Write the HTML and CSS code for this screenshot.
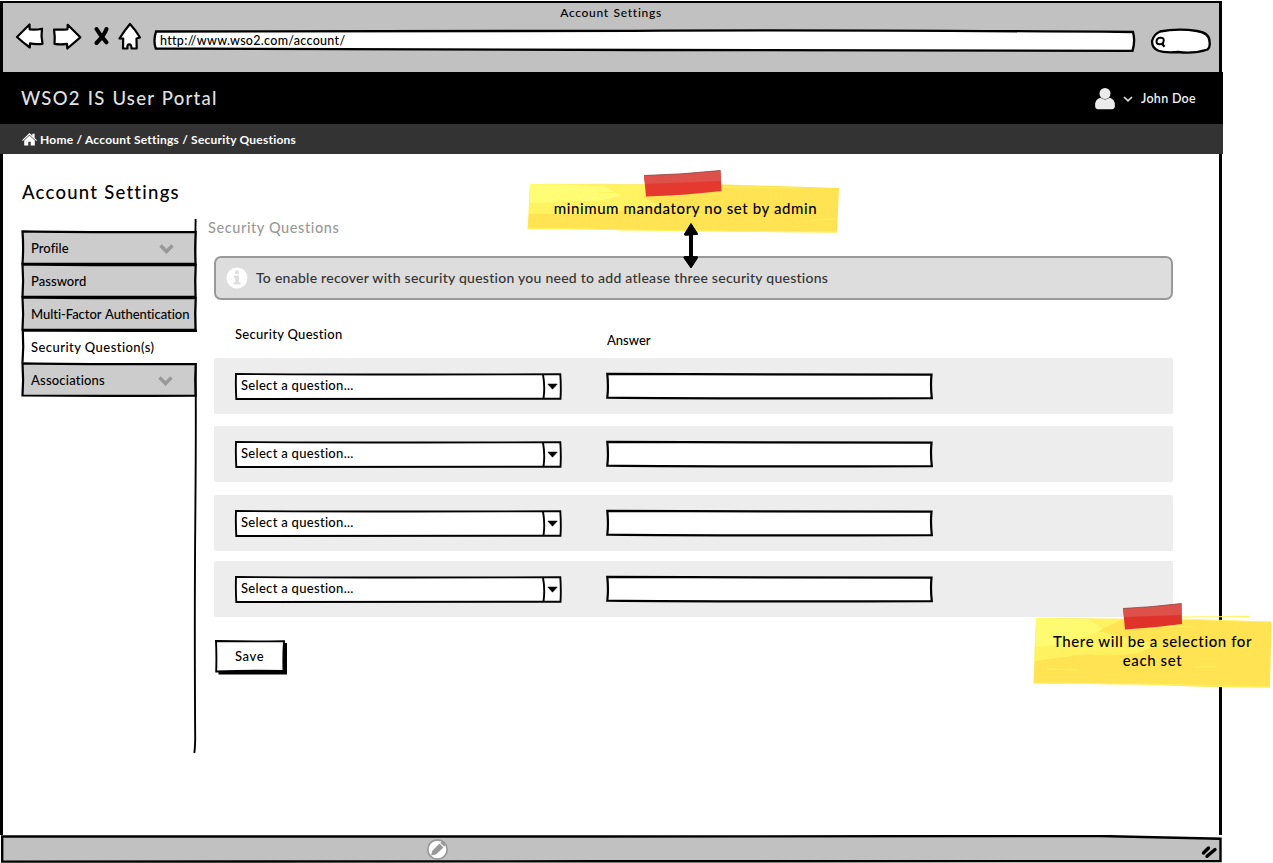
FILE: index.html
```
<!DOCTYPE html>
<html lang="en">
<head>
<meta charset="utf-8">
<title>Account Settings</title>
<link rel="stylesheet" href="styles.css">
</head>
<body>
<div class="stage">
<div class="window">
  <header class="chrome">
    <div class="chrome-title"><span>Account Settings</span></div>
    <div class="toolbar">
      <svg class="nav-icon" width="136" height="34" viewBox="0 0 136 34">
        <g fill="#fff" stroke="#000" stroke-width="2.2" stroke-linejoin="round">
          <path d="M3 17 15.500 4.500 15.700 9.500Q23 10 28 8.700Q26.800 16 28.500 23.800Q21 24.500 16 23.400L15.800 27.500Q9 22.500 3 17Z"/>
          <path d="M40 9.500Q47 10 53.500 9.300L53.700 4.800 66.300 17.300 53.300 28.500 53 23.800Q46.500 24.800 40.500 23.800Q41.200 17 40 9.500Z"/>
          <path d="M116 4Q121.500 10 126 17.500L122.500 18.500 122.700 28.500 117.500 28.500Q117.500 24 115 24.300Q113 24.500 113.500 28.500L109 28.500 109.200 18.700 105.500 18.500Q110.500 10.500 116 4Z"/>
        </g>
        <path d="M82.500 9Q86 15 92.500 22.300M92.500 9Q90.500 15 82.500 23" fill="none" stroke="#000" stroke-width="4" stroke-linecap="round"/>
      </svg>
      <div class="url sketch">
        <svg class="outline" viewBox="0 0 983 24"><path d="M3 2.500Q300 3 480 1.800T980 3Q982.500 12 979.500 21.800Q600 22 490 21T2.800 19.500Q0 12 3 2.500Z" fill="#fff" stroke="#000" stroke-width="2.300"/></svg>
        <span>http://www.wso2.com/account/</span>
      </div>
      <svg class="search" width="62" height="28" viewBox="0 0 62 28">
        <path d="M10 4.500Q28 1 47 4Q60 6 59.500 15Q60.500 20 57.500 22.500Q44 27 28 25Q14 26 8 23.500Q2 21 2 14Q4 7 10 4.500Z" fill="#fff" stroke="#000" stroke-width="2.300"/>
        <path d="M6.500 15Q6.500 11 10 10.700Q14 10.300 13.700 13.500Q13.500 17.300 10 17.300Q6.800 17.500 6.500 15Z" fill="none" stroke="#000" stroke-width="2"/><path d="M11.500 16 14.500 19.800" stroke="#000" stroke-width="2.200"/>
      </svg>
    </div>
  </header>

  <div class="portal">
    <span class="portal-name">WSO2 IS User Portal</span>
    <div class="user">
      <svg width="20" height="22" viewBox="0 0 20 22" fill="#ebebeb"><circle cx="10" cy="5.500" r="5.500"/><path d="M5.500 9.800Q10 13.200 14.500 9.800Q20 11 19.900 17.500Q20 21.300 17 21.300H3Q0 21.300 .1 17.500Q0 11 5.500 9.800Z"/></svg>
      <svg width="10" height="6" viewBox="0 0 10 6"><path d="M1 1 5 4.800 9 1" fill="none" stroke="#ddd" stroke-width="1.700"/></svg>
      <span class="user-name">John Doe</span>
    </div>
  </div>
  <nav class="crumbs">
    <svg width="15" height="13" viewBox="0 0 15 13" fill="#fff"><path d="M7.500 0 10.300 2.700V.8H12.600V5L15 7.300 14.200 8.100 7.500 1.700 .8 8.100 0 7.300Z"/><path d="M7.500 2.500 12.800 7.500V12.500H8.700V8.800H6.300V12.500H2.200V7.500Z"/></svg>
    <span>Home / Account Settings / Security Questions</span>
  </nav>

  <div class="body">
    <aside class="side">
      <h1 class="page-title">Account Settings</h1>
      <div class="tabs">
        <svg class="rule" width="4" height="535" viewBox="0 0 4 535"><path d="M2.600 0Q1.800 60 2.500 130T2.300 300 2.200 520Q2 530 1.300 534" fill="none" stroke="#000" stroke-width="1.900"/></svg>
        <div class="tab profile sketch"><svg class="outline" viewBox="0 0 176 35"><path d="M1.500 1.300Q60 2.300 174.700 2Q173.800 17 174.500 33.600Q70 34 1.500 33.500Q2.700 18 1.500 1.300Z"/></svg><span>Profile</span><svg class="chev" width="15" height="10" viewBox="0 0 15 10"><path d="M1.500 1.500 7.500 7.500 13.500 1.500"/></svg></div>
        <div class="tab password sketch"><svg class="outline" viewBox="0 0 176 35"><path d="M1.500 1.300Q60 2.300 174.700 2Q173.800 17 174.500 33.600Q70 34 1.500 33.500Q2.700 18 1.500 1.300Z"/></svg><span>Password</span></div>
        <div class="tab mfa sketch"><svg class="outline" viewBox="0 0 176 35"><path d="M1.500 1.300Q60 2.300 174.700 2Q173.800 17 174.500 33.600Q70 34 1.500 33.500Q2.700 18 1.500 1.300Z"/></svg><span>Multi-Factor Authentication</span></div>
        <div class="tab active sketch"><svg class="outline" viewBox="0 0 176 35"><path class="blank" d="M1.500 1.500H176V34H1.500Z"/><path class="open" d="M176 1.800Q60 2 1.800 1.500Q2.800 18 1.500 33.500"/></svg><span>Security Question(s)</span></div>
        <div class="tab assoc sketch"><svg class="outline" viewBox="0 0 176 35"><path d="M1.500 1.300Q60 2.300 174.700 2Q173.800 17 174.500 33.600Q70 34 1.500 33.500Q2.700 18 1.500 1.300Z"/></svg><span>Associations</span><svg class="chev" width="15" height="10" viewBox="0 0 15 10"><path d="M1.500 1.500 7.500 7.500 13.500 1.500"/></svg></div>
      </div>
    </aside>

    <main class="main">
      <h2 class="section-title">Security Questions</h2>
      <div class="alert">
        <svg width="22" height="22" viewBox="0 0 22 22"><circle cx="11" cy="11" r="10.500" fill="#fff"/><circle cx="11" cy="5.300" r="2" fill="#ddd"/><path d="M8 8.600H12.800V15.200H14.500V17.500H7.500V15.200H9.300V10.800H8Z" fill="#ddd"/></svg>
        <span>To enable recover with security question you need to add atlease three security questions</span>
      </div>
      <div class="labels"><span class="label-q">Security Question</span><span class="label-a">Answer</span></div>
      <div class="rows">
        <div class="row">
          <div class="select sketch"><svg class="outline" viewBox="0 0 327 28"><path d="M1 1Q150 1.900 325.300 1.200Q326.200 14 325.500 25.700Q130 26.200 1.300 26Q.6 14 1 1ZM308 1.500Q310.200 14 308.500 25.500"/><path class="caret" d="M312.800 11H322.300L317.500 16.200Z"/></svg><span>Select a question...</span></div>
          <div class="answer sketch"><svg class="outline" viewBox="0 0 327 28"><path d="M1.300 .9Q150 .9 325.500 1.700Q324.400 13 325.800 25.200Q120 25.900 1.300 24.700Q2.600 14 1.300 .9Z"/></svg></div>
        </div>
        <div class="row">
          <div class="select sketch"><svg class="outline" viewBox="0 0 327 28"><path d="M1 1Q150 1.900 325.300 1.200Q326.200 14 325.500 25.700Q130 26.200 1.300 26Q.6 14 1 1ZM308 1.500Q310.200 14 308.500 25.500"/><path class="caret" d="M312.800 11H322.300L317.500 16.200Z"/></svg><span>Select a question...</span></div>
          <div class="answer sketch"><svg class="outline" viewBox="0 0 327 28"><path d="M1.300 .9Q150 .9 325.500 1.700Q324.400 13 325.800 25.200Q120 25.900 1.300 24.700Q2.600 14 1.300 .9Z"/></svg></div>
        </div>
        <div class="row third">
          <div class="select sketch"><svg class="outline" viewBox="0 0 327 28"><path d="M1 1Q150 1.900 325.300 1.200Q326.200 14 325.500 25.700Q130 26.200 1.300 26Q.6 14 1 1ZM308 1.500Q310.200 14 308.500 25.500"/><path class="caret" d="M312.800 11H322.300L317.500 16.200Z"/></svg><span>Select a question...</span></div>
          <div class="answer sketch"><svg class="outline" viewBox="0 0 327 28"><path d="M1.300 .9Q150 .9 325.500 1.700Q324.400 13 325.800 25.200Q120 25.900 1.300 24.700Q2.600 14 1.300 .9Z"/></svg></div>
        </div>
        <div class="row fourth">
          <div class="select sketch"><svg class="outline" viewBox="0 0 327 28"><path d="M1 1Q150 1.900 325.300 1.200Q326.200 14 325.500 25.700Q130 26.200 1.300 26Q.6 14 1 1ZM308 1.500Q310.200 14 308.500 25.500"/><path class="caret" d="M312.800 11H322.300L317.500 16.200Z"/></svg><span>Select a question...</span></div>
          <div class="answer sketch"><svg class="outline" viewBox="0 0 327 28"><path d="M1.300 .9Q150 .9 325.500 1.700Q324.400 13 325.800 25.200Q120 25.900 1.300 24.700Q2.600 14 1.300 .9Z"/></svg></div>
        </div>
      </div>
      <div class="save sketch"><svg class="outline" viewBox="0 0 73 35"><path class="shadow" d="M3.500 3H72V34.500H3.500Z"/><path d="M1 1Q35 1.700 69 1.200Q68 15 68.500 31Q35 30.200 1.200 31.500Q1.700 15 1 1Z"/></svg><span>Save</span></div>
    </main>
  </div>

  <footer class="status">
    <svg class="status-line" width="1222" height="29" viewBox="0 0 1222 29"><path d="M2.200 1.500Q300 1.600 600 1.500T1100 1Q1160 2.500 1220.500 3.700V26Q900 25.800 600 26.300T2.200 26.600Z" fill="#c1c1c1" stroke="#000" stroke-width="2.400"/>
      <path d="M1203.500 18 1208.500 13M1207 21.300 1215 14.500" stroke="#000" stroke-width="3.400" stroke-linecap="round"/>
      <circle cx="437.500" cy="14.500" r="9.700" fill="#fff" stroke="#999" stroke-width="1.700"/>
      <path transform="translate(-.5 -1)" d="M431.500 21.500 432.800 16.800 440 9.600 443.900 13.400 436.500 20.600ZM440.800 8.900 442 7.800Q443 7.500 444.500 9T445.700 11.500L444.700 12.600Z" fill="#999"/></svg>
  </footer>
</div>

<div class="note note-top">
  <svg class="outline" viewBox="0 0 312 64">
    <path d="M3 14 200 14.500 312 18 310 62.500Q220 62.500 120 60L.5 59 1.500 44Z" fill="#ffe353"/>
    <path d="M3 14 150 15 115 27 135 36 60 44H1.500Z" fill="#fffa68" opacity=".7"/><path d="M3 14 75 15 95 26 70 31 3 33Z" fill="#ffff78" opacity=".8"/>
    <path d="M50 15 118 17 M70 22 145 25M30 31 144 36M50 41 110 41M150 44 180 45M285 50 309 49M160 17 274 18M1 58 70 59M90 60 310 62" fill="none" stroke="#fff35d" stroke-width="1.200"/>
    <path d="M117 5.500Q155 4.500 193.500 .5L194.500 21Q155 25.500 119 26.500Z" fill="#e5392f"/><path d="M117 5.500Q155 4.500 193.500 .5L194 11 118 14Z" fill="#dd514a"/><path d="M117 5.500Q155 4.500 193.500 .5" stroke="#8a5350" stroke-width=".8" fill="none"/>
  </svg>
  <span>minimum mandatory no set by admin</span>
</div>
<svg class="arrow" width="18" height="48" viewBox="0 0 18 48"><path d="M9 10V38" stroke="#000" stroke-width="4"/><path d="M9 1.500 15.500 11.500Q16 13 14 12.500L4 13.300Q2 13.500 2.500 12ZM9 46 15.500 36Q16 34 14 34.700L3 34.500Q1.500 34.500 2 36Z" stroke="#000" stroke-linejoin="round"/></svg>
<div class="note note-bottom">
  <svg class="outline" viewBox="0 0 239 86">
    <path d="M3 15 120 16 238.500 18.500 237 84.500Q180 85 110 81.500L.5 80.500 1 67Z" fill="#ffe353"/>
    <path d="M3 15 90 16 65 28 125 42 105 50 55 51 1 58Z" fill="#fffa68" opacity=".65"/><path d="M3 15 55 16 70 26 40 40 3 44Z" fill="#ffff78" opacity=".7"/>
    <path d="M140 14 216 13.500M150 16 235 19M15 48 75 52 104 50M14 66 45 67M100 22 160 24M160 64 184 64M1 80 110 81 237 84" fill="none" stroke="#fff35d" stroke-width="1.200"/>
    <path d="M90 5.500Q120 4 148.500 .5L149 21Q120 25 92 26.500Z" fill="#de322b"/><path d="M90 5.500Q120 4 148.500 .5L148.700 12 91 14Z" fill="#dd514a"/><path d="M90 5.500Q120 4 148.500 .5" stroke="#8a5350" stroke-width=".8" fill="none"/>
  </svg>
  <span>There will be a selection for<br>each set</span>
</div>
</div>
</body>
</html>
```
FILE: styles.css
```
* { box-sizing: border-box; }
body { margin: 0; background: #fff; color: #000; font: 500 13px/16px Lato, sans-serif; font-variant-ligatures: none; white-space: nowrap; }
h1, h2 { margin: 0; font-weight: 500; }
svg { display: block; flex: none; }
.stage { position: relative; width: 1273px; height: 863px; overflow: hidden; }
.window { display: flex; flex-direction: column; width: 1223px; height: 863px; }

/* hand-drawn outlines lie beneath a control's text */
.sketch { position: relative; }
.sketch > span { position: relative; }
.outline { position: absolute; left: 0; top: 0; width: 100%; height: 100%; overflow: visible; }

.chrome { width: 1222px; height: 71px; margin-top: 1px; background: #c1c1c1; border: solid #000; border-width: 2px 3px 0; }
.chrome-title { height: 19px; display: flex; justify-content: center; padding-top: 2px; font-size: 12px; letter-spacing: .7px; word-spacing: 1px; }
.toolbar { display: flex; align-items: flex-start; padding-left: 11px; }
.nav-icon { margin-top: -2px; }
.url { width: 983px; height: 24px; margin: 7px 0 0 3px; padding: 3px 0 0 7px; font-size: 12.500px; letter-spacing: .3px; }
.url > span { top: 1px; }
.search { margin: 5px 0 0 14px; }

.portal { height: 52px; background: #000; display: flex; align-items: center; justify-content: space-between; padding: 0 27px 0 21px; color: #e0e0e0; }
.portal-name { font-size: 18.500px; letter-spacing: 1.250px; word-spacing: 1px; }
.user { display: flex; align-items: center; gap: 8px; padding-top: 1px; }
.user-name { font-size: 12.500px; font-weight: 600; letter-spacing: .3px; color: #f0f0f0; }
.crumbs { height: 30px; background: #333; color: #fff; display: flex; align-items: center; gap: 3px; padding: 1px 0 0 22px; font-size: 12px; font-weight: 700; letter-spacing: .22px; }

.body { flex: 1; width: 1222px; display: flex; border: solid #000; border-width: 0 3px; }
.side { width: 194px; padding: 26px 0 0 19px; }
.page-title { font-size: 18.500px; line-height: 24px; letter-spacing: 1.250px; }
.tabs { position: relative; margin-left: -1px; padding-top: 26px; }
.rule { position: absolute; left: 172px; top: 15px; }
.tab { width: 176px; height: 33px; display: flex; align-items: center; justify-content: space-between; padding: 2px 23px 0 10px; letter-spacing: .05px; }
.tab .outline { height: 35px; fill: #ccc; stroke: #000; stroke-width: 2.200px; }
.tab .blank { fill: #fff; stroke: none; }
.tab .open { fill: none; }
.mfa { letter-spacing: -.05px; word-spacing: 1px; }
.active { letter-spacing: .45px; }
.assoc { padding-right: 24px; letter-spacing: .2px; }
.chev { position: relative; top: 1px; }
.chev path { fill: none; stroke: #999; stroke-width: 3.400px; }

.main { flex: 1; padding: 64px 0 0 11px; }
.section-title { font-size: 14.500px; line-height: 20px; letter-spacing: .6px; color: #999; }
.alert { width: 959px; height: 44px; margin: 18px 0 0 6px; border: 2px solid #999; border-radius: 7px; background: #ddd; color: #333; display: flex; align-items: center; gap: 8px; padding-left: 10px; font-size: 14px; letter-spacing: .26px; }
.labels { display: flex; margin: 26px 0 0 27px; height: 32px; }
.label-q { width: 371px; letter-spacing: .3px; }
.label-a { padding: 6px 0 0 1px; }
.rows { width: 959px; margin-left: 6px; }
.row { height: 56px; margin-bottom: 12px; padding: 15px 0 0 21px; border-radius: 2px; background: #ededed; display: flex; gap: 44px; }
.third { margin: 13px 0 10px; }
.fourth { margin-bottom: 0; }
.select, .answer { width: 327px; height: 28px; }
.select .outline, .answer .outline, .save .outline { fill: #fff; stroke: #000; stroke-width: 1.900px; }
.answer .outline { stroke-width: 2.200px; }
.outline .caret { fill: #000; stroke-width: .5px; }
.outline .shadow { fill: #000; stroke: none; }
.select { padding: 4px 0 0 6px; letter-spacing: .3px; }
.save { width: 73px; height: 35px; margin: 23px 0 0 7px; padding: 8px 0 0 20px; letter-spacing: .6px; }

.status { height: 28px; }

.note { position: absolute; text-align: center; font-size: 15px; line-height: 19px; letter-spacing: .6px; }
.note > span { position: relative; }
.note-top { left: 527px; top: 170px; width: 312px; height: 64px; padding: 29px 0 0 5px; }
.note-bottom { left: 1033px; top: 603px; width: 239px; height: 86px; padding-top: 29px; }
.arrow { position: absolute; left: 682px; top: 222px; }
```
